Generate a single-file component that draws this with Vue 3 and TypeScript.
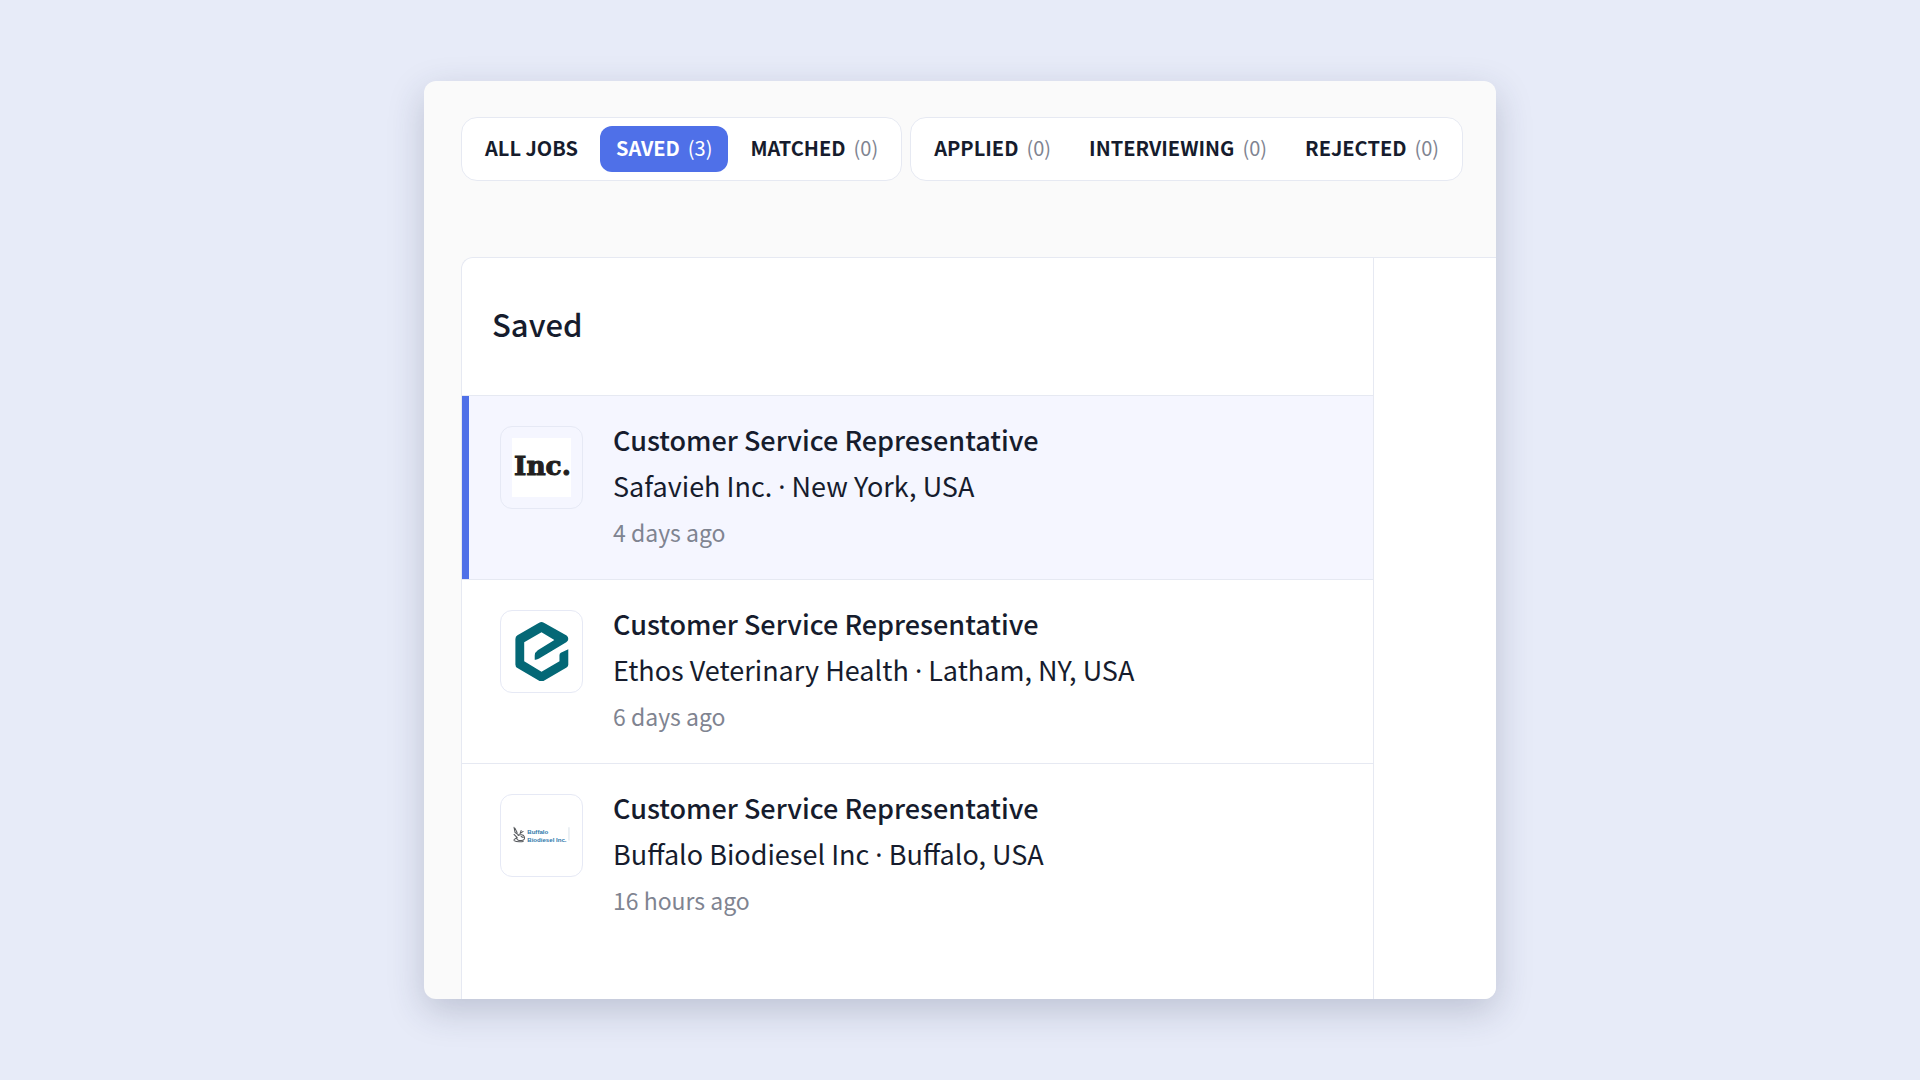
<script setup lang="ts">
import { ref } from 'vue'

interface Tab {
  id: string
  label: string
  count?: number
}

interface Job {
  id: number
  title: string
  company: string
  location: string
  posted: string
  logo: 'inc' | 'ethos' | 'buffalo'
}

const tabGroups: Tab[][] = [
  [
    { id: 'all', label: 'ALL JOBS' },
    { id: 'saved', label: 'SAVED', count: 3 },
    { id: 'matched', label: 'MATCHED', count: 0 },
  ],
  [
    { id: 'applied', label: 'APPLIED', count: 0 },
    { id: 'interviewing', label: 'INTERVIEWING', count: 0 },
    { id: 'rejected', label: 'REJECTED', count: 0 },
  ],
]

const jobs: Job[] = [
  { id: 1, title: 'Customer Service Representative', company: 'Safavieh Inc.', location: 'New York, USA', posted: '4 days ago', logo: 'inc' },
  { id: 2, title: 'Customer Service Representative', company: 'Ethos Veterinary Health', location: 'Latham, NY, USA', posted: '6 days ago', logo: 'ethos' },
  { id: 3, title: 'Customer Service Representative', company: 'Buffalo Biodiesel Inc', location: 'Buffalo, USA', posted: '16 hours ago', logo: 'buffalo' },
]

const activeTab = ref('saved')
const selectedJob = ref(1)
</script>

<template>
  <main class="page">
    <section class="card">
      <nav class="tabs" aria-label="Job lists">
        <div v-for="(group, i) in tabGroups" :key="i" class="tab-group">
          <button
            v-for="tab in group"
            :key="tab.id"
            type="button"
            class="tab"
            :class="{ active: tab.id === activeTab }"
            @click="activeTab = tab.id"
          >
            <span class="tab-label">{{ tab.label }}</span>
            <span v-if="tab.count !== undefined" class="tab-count">({{ tab.count }})</span>
          </button>
        </div>
      </nav>

      <div class="panel">
        <div class="list-column">
          <h1 class="heading">Saved</h1>
          <ul class="jobs">
            <li v-for="job in jobs" :key="job.id" class="job" :class="{ selected: job.id === selectedJob }">
              <a class="job-link" href="#" @click.prevent="selectedJob = job.id">
                <span class="logo">
                  <svg v-if="job.logo === 'inc'" class="logo-art" viewBox="0 0 58 58" aria-hidden="true">
                    <rect width="58" height="58" fill="#fff" />
                    <text x="2" y="36" class="inc-text">Inc.</text>
                  </svg>
                  <svg v-else-if="job.logo === 'ethos'" class="logo-art" viewBox="65 69 174 174" aria-hidden="true">
                    <path
                      fill="#046876"
                      d="M145 71Q152 67 159 71L226 109Q231 113 231 119Q231 125 225 129L145 177Q139 181 132 180L132 168Q132 158 141 152L190 122L152 99L101 129V185L152 216L205 185V167Q205 162 209 160L231 149V195Q231 200 226 203L159 242Q152 246 145 242L81 205Q75 201 75 194V119Q75 112 81 108Z"
                    />
                  </svg>
                  <svg v-else class="logo-art" viewBox="0 0 58 58" aria-hidden="true">
                    <g fill="none" stroke="#55585c" stroke-width="1" stroke-linecap="round">
                      <path d="M2 21l1 5 3 2M3 22l2 4M9 24l-1 3 3-2M2 28l3 3-3 2M6 29c2-1 5-1 6 1s0 4-3 4-5-1-4-3M9 30l2 1M2 34c3 2 7 1 9 1" />
                    </g>
                    <text x="15" y="28" class="buffalo-text">Buffalo</text>
                    <text x="15" y="35" class="buffalo-text">Biodiesel Inc.</text>
                    <path d="M56 21v13" stroke="#d9e2ea" stroke-width="1" />
                  </svg>
                </span>
                <span class="job-text">
                  <strong class="job-title">{{ job.title }}</strong>
                  <span class="job-company">{{ job.company }} <span class="dot">·</span> {{ job.location }}</span>
                  <span class="job-posted">{{ job.posted }}</span>
                </span>
              </a>
            </li>
          </ul>
        </div>
        <aside class="detail-column"></aside>
      </div>
    </section>
  </main>
</template>

<style>
body {
  margin: 0;
  background: #e7ebf8;
}
</style>

<style scoped>
.page {
  box-sizing: border-box;
  min-height: 100vh;
  display: flex;
  align-items: center;
  justify-content: center;
  padding: 24px;
  font-family: 'Noto Sans CJK SC', 'Noto Sans', sans-serif;
  color: #161c2d;
}

.card {
  box-sizing: border-box;
  width: 100%;
  max-width: 1072px;
  padding: 36px 0 0 37px;
  overflow: hidden;
  border-radius: 12px;
  background: #fafafa;
  box-shadow: 0 12px 36px rgba(40, 50, 80, 0.22);
}

.tabs {
  display: flex;
  flex-wrap: wrap;
  gap: 8px;
}

.tab-group {
  display: flex;
  gap: 6px;
  padding: 8px 7px;
  border: 1px solid #e6e9f2;
  border-radius: 16px;
  background: #fff;
}

.tab {
  display: flex;
  align-items: center;
  gap: 8px;
  padding: 0 16px 2px;
  border: 0;
  border-radius: 12px;
  background: transparent;
  color: inherit;
  font-family: inherit;
  font-size: 20px;
  line-height: 44px;
  white-space: nowrap;
  cursor: pointer;
}

.tab-label {
  font-weight: 700;
}

.tab-count {
  color: #7f8491;
  font-weight: 400;
}

.tab.active {
  background: #4f70e8;
  color: #fff;
}

.tab.active .tab-count {
  color: #fff;
}

.panel {
  display: flex;
  margin-top: 76px;
  border: 1px solid #e6e9f2;
  border-width: 1px 0 0 1px;
  border-top-left-radius: 12px;
  background: #fff;
}

.list-column {
  flex: 1;
  min-width: 0;
  padding-bottom: 52px;
  border-right: 1px solid #e6e9f2;
}

.detail-column {
  width: 122px;
}

.heading {
  margin: 0;
  padding: 36px 30px 41px;
  font-size: 31px;
  font-weight: 500;
  line-height: 60px;
}

.jobs {
  margin: 0;
  padding: 0;
  list-style: none;
}

.job {
  border-top: 1px solid #e6e9f2;
}

.job-link {
  display: flex;
  gap: 30px;
  padding: 21px 31px 24px;
  border-left: 7px solid transparent;
  color: inherit;
  text-decoration: none;
}

.selected .job-link {
  border-left-color: #4f70e8;
  background: #f5f6ff;
}

.logo {
  display: flex;
  flex: none;
  align-items: center;
  justify-content: center;
  width: 81px;
  height: 81px;
  margin-top: 9px;
  border: 1px solid #e6e9f5;
  border-radius: 12px;
}

.logo-art {
  width: 59px;
  height: 59px;
}

.inc-text {
  fill: #231f20;
  stroke: #231f20;
  stroke-width: 1px;
  font-family: 'DejaVu Serif', serif;
  font-size: 26px;
  font-weight: 700;
}

.buffalo-text {
  fill: #2f78aa;
  font-family: 'Liberation Sans', sans-serif;
  font-size: 6px;
  font-weight: 700;
}

.job-text {
  display: flex;
  flex-direction: column;
  min-width: 0;
  line-height: 46px;
}

.job-title {
  font-size: 27px;
  font-weight: 500;
}

.job-company {
  font-size: 27px;
}

.dot {
  font-family: 'Noto Sans', sans-serif;
  line-height: 1;
}

.job-posted {
  color: #7f8491;
  font-size: 23px;
}
</style>
